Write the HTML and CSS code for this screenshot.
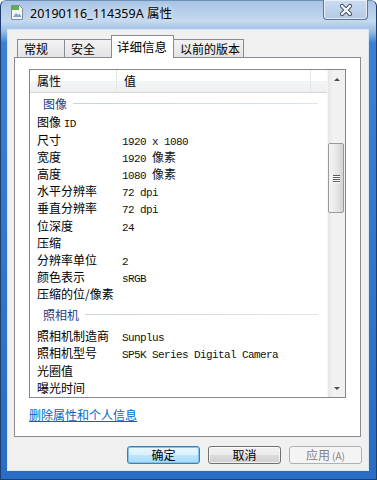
FILE: index.html
```html
<!DOCTYPE html>
<html lang="zh">
<head>
<meta charset="utf-8">
<title>属性</title>
<link rel="stylesheet" href="styles.css">
</head>
<body>
<div class="window">
  <div class="titlebar">
    <svg class="app-icon" width="14" height="15" viewBox="0 0 14 15">
      <path d="M1.5 0.5h8l3 3v11h-11z" fill="#f4f6f8" stroke="#7d8a96"/>
      <rect x="2" y="1" width="7" height="4" fill="#5fb04a"/>
      <path d="M3 12l3-4 2 2 1.5-1.5 2 3.5z" fill="#7aa6d4"/>
    </svg>
    <span class="title">20190116_114359A 属性</span>
    <div class="close">
      <svg width="16" height="14" viewBox="0 0 16 14">
        <path d="M4 3l8 8M12 3l-8 8" stroke="#3b4a5c" stroke-width="4.2" stroke-linecap="round"/>
        <path d="M4 3l8 8M12 3l-8 8" stroke="#ffffff" stroke-width="2.4" stroke-linecap="round"/>
      </svg>
    </div>
  </div>
  <div class="client">
    <div class="tabs">
      <div class="tab">常规</div>
      <div class="tab">安全</div>
      <div class="tab active">详细信息</div>
      <div class="tab">以前的版本</div>
    </div>
    <div class="panel">
      <div class="listbox">
        <div class="list">
          <div class="header">
            <div class="hcol c1">属性</div>
            <div class="hcol c2">值</div>
            <div class="hcol c3"></div>
          </div>
          <div class="group first"><span>图像</span><i class="gline"></i></div>
          <div class="row"><span class="k">图像 <span class="mono">ID</span></span><span class="v"></span></div>
          <div class="row"><span class="k">尺寸</span><span class="v">1920 x 1080</span></div>
          <div class="row"><span class="k">宽度</span><span class="v">1920 <span class="cjk">像素</span></span></div>
          <div class="row"><span class="k">高度</span><span class="v">1080 <span class="cjk">像素</span></span></div>
          <div class="row"><span class="k">水平分辨率</span><span class="v">72 dpi</span></div>
          <div class="row"><span class="k">垂直分辨率</span><span class="v">72 dpi</span></div>
          <div class="row"><span class="k">位深度</span><span class="v">24</span></div>
          <div class="row"><span class="k">压缩</span><span class="v"></span></div>
          <div class="row"><span class="k">分辨率单位</span><span class="v">2</span></div>
          <div class="row"><span class="k">颜色表示</span><span class="v">sRGB</span></div>
          <div class="row"><span class="k">压缩的位/像素</span><span class="v"></span></div>
          <div class="group second"><span>照相机</span><i class="gline"></i></div>
          <div class="row"><span class="k">照相机制造商</span><span class="v">Sunplus</span></div>
          <div class="row"><span class="k">照相机型号</span><span class="v">SP5K Series Digital Camera</span></div>
          <div class="row"><span class="k">光圈值</span><span class="v"></span></div>
          <div class="row"><span class="k">曝光时间</span><span class="v"></span></div>
        </div>
        <div class="scrollbar">
          <div class="arrow up"></div>
          <div class="track">
            <div class="thumb"><i></i><i></i><i></i><i></i></div>
          </div>
          <div class="arrow down"></div>
        </div>
      </div>
      <a class="link" href="#">删除属性和个人信息</a>
    </div>
    <div class="buttons">
      <div class="btn default">确定</div>
      <div class="btn">取消</div>
      <div class="btn disabled">应用<span class="acc">(A)</span></div>
    </div>
  </div>
</div>
</body>
</html>
```

FILE: styles.css
```css
* { box-sizing: border-box; }
html, body { margin: 0; padding: 0; }
body {
  width: 377px;
  height: 480px;
  overflow: hidden;
  font-family: "Noto Sans CJK SC", "Noto Sans", sans-serif;
  font-size: 12px;
  color: #000;
}
.window {
  width: 377px;
  height: 480px;
  display: flex;
  flex-direction: column;
  background: linear-gradient(to bottom, #a8c4e4 0px, #c4d9ef 20px, #9dbde3 30px, #3a80d4 42px, #2a6dc4 100%);
  border: 1px solid #1d3e6e;
  border-top-color: #6f8fb8;
  border-radius: 6px 6px 0 0;
}
.titlebar {
  height: 29px;
  display: flex;
  align-items: flex-start;
  padding-left: 9px;
}
.app-icon { margin-top: 4px; flex: none; }
.title {
  margin-left: 6px;
  margin-top: 4px;
  font-family: "Noto Sans", "Noto Sans CJK SC", sans-serif;
  font-size: 12.5px;
  line-height: 18px;
  color: #000;
  text-shadow: 0 0 6px rgba(255,255,255,0.9);
}
.close {
  margin-left: auto;
  margin-right: 8px;
  margin-top: -1px;
  width: 45px;
  height: 20px;
  border: 1px solid #5d7598;
  border-top: none;
  border-radius: 0 0 4px 4px;
  background: linear-gradient(to bottom, #c9dbee, #b4cbe6);
  box-shadow: inset 0 0 0 1px rgba(255,255,255,0.6);
  display: flex;
  align-items: center;
  justify-content: center;
}
.client {
  margin: 0 8px 9px 7px;
  flex: 1;
  background: #f0f0f0;
  box-shadow: 0 0 0 1px #d9e6f4;
  display: flex;
  flex-direction: column;
}
.tabs {
  display: flex;
  align-items: flex-end;
  padding-left: 9px;
  margin-top: 5px;
  height: 22px;
  position: relative;
  z-index: 1;
}
.tab {
  height: 18px;
  padding: 0 6px;
  border: 1px solid #898c95;
  border-bottom: none;
  margin-right: -1px;
  background: linear-gradient(to bottom, #f2f2f2, #e4e4e4);
  font-size: 12px;
  line-height: 17px;
  white-space: nowrap;
}
.tab:nth-child(1) { width: 48px; }
.tab:nth-child(2) { width: 48px; }
.tab:nth-child(4) { width: 71px; }
.tab.active {
  width: 63px;
  height: 23px;
  margin-bottom: -1px;
  background: #fff;
  line-height: 21px;
  font-size: 12.5px;
  padding: 0 5px;
}
.panel {
  margin: 0 7px 0 6px;
  height: 380px;
  border: 1px solid #898c95;
  background: #fff;
  padding: 11px 14px 0 14px;
}
.listbox {
  height: 329px;
  border: 1px solid #828790;
  display: flex;
  overflow: hidden;
}
.list {
  flex: 1;
  overflow: hidden;
}
.header {
  display: flex;
  height: 23px;
  border-bottom: 1px solid #d5d5d5;
  background: linear-gradient(to bottom, #ffffff 0, #ffffff 50%, #f3f4f6 50%, #eef0f2 100%);
}
.hcol {
  line-height: 22px;
  padding-left: 7px;
  border-right: 1px solid #e3e5e8;
}
.hcol.c1 { width: 87px; }
.hcol.c2 { width: 194px; }
.hcol.c3 { flex: 1; border-right: none; }
.group {
  display: flex;
  align-items: center;
  padding-left: 13px;
  color: #1e3a8a;
}
.group.first { height: 20.4px; }
.group.second { height: 24.8px; }
.gline {
  flex: 1;
  height: 1px;
  margin: 0 9px 0 6px;
  background: linear-gradient(to right, #c9d3de, #dfe5ec);
}
.row {
  display: flex;
  align-items: baseline;
  height: 17.2px;
  line-height: 17.2px;
  white-space: nowrap;
}
.k {
  width: 92px;
  padding-left: 7px;
  flex: none;
}
.v, .mono {
  font-family: "Liberation Mono", "Noto Sans CJK SC", monospace;
  font-size: 11px;
  letter-spacing: -0.6px;
  color: #111;
}
.cjk {
  font-family: "Noto Sans CJK SC", sans-serif;
  font-size: 12px;
  letter-spacing: 0;
}
.scrollbar {
  width: 18px;
  flex: none;
  display: flex;
  flex-direction: column;
  background: linear-gradient(to right, #e6e6e6, #f2f2f2 30%, #f0f0f0);
  border-left: 1px solid #f5f5f5;
}
.arrow {
  height: 17px;
  position: relative;
}
.arrow::after {
  content: "";
  position: absolute;
  left: 6px;
  width: 0;
  height: 0;
  border-left: 3px solid transparent;
  border-right: 3px solid transparent;
}
.arrow.up::after { top: 8px; border-bottom: 3px solid #4d4d4d; }
.arrow.down::after { top: 7px; border-top: 3px solid #4d4d4d; }
.track {
  flex: 1;
  padding-top: 56px;
}
.thumb {
  width: 16px;
  height: 70px;
  border: 1px solid #9a9a9a;
  border-radius: 2px;
  background: linear-gradient(to right, #f4f4f4, #e8e8e8 50%, #d4d4d4);
  display: flex;
  flex-direction: column;
  justify-content: center;
  align-items: center;
  gap: 1px;
}
.thumb i {
  display: block;
  width: 7px;
  height: 1px;
  background: #5a5a5a;
  box-shadow: 0 1px 0 #fff;
}
.link {
  display: inline-block;
  margin-top: 9px;
  color: #0066cc;
  text-decoration: underline;
  font-size: 12px;
  line-height: 16px;
}
.buttons {
  display: flex;
  justify-content: flex-end;
  gap: 8px;
  margin-top: 9px;
  padding-right: 6px;
}
.btn {
  width: 73px;
  height: 18px;
  border: 1px solid #707070;
  border-radius: 3px;
  background: linear-gradient(to bottom, #f2f2f2 0, #ebebeb 50%, #dddddd 50%, #cfcfcf 100%);
  box-shadow: inset 0 0 0 1px rgba(255,255,255,0.7);
  text-align: center;
  line-height: 16px;
  font-size: 12px;
}
.btn.default {
  border-color: #3c7fb1;
  background: linear-gradient(to bottom, #eaf6fd 0, #d9f0fc 50%, #bee6fd 50%, #a7d9f5 100%);
  box-shadow: inset 0 0 0 1px #7ec4ec;
}
.btn.disabled {
  border-color: #adb2b5;
  background: #f4f4f4;
  box-shadow: none;
  color: #838383;
}
.acc {
  font-size: 10px;
  margin-left: 2px;
}
```
